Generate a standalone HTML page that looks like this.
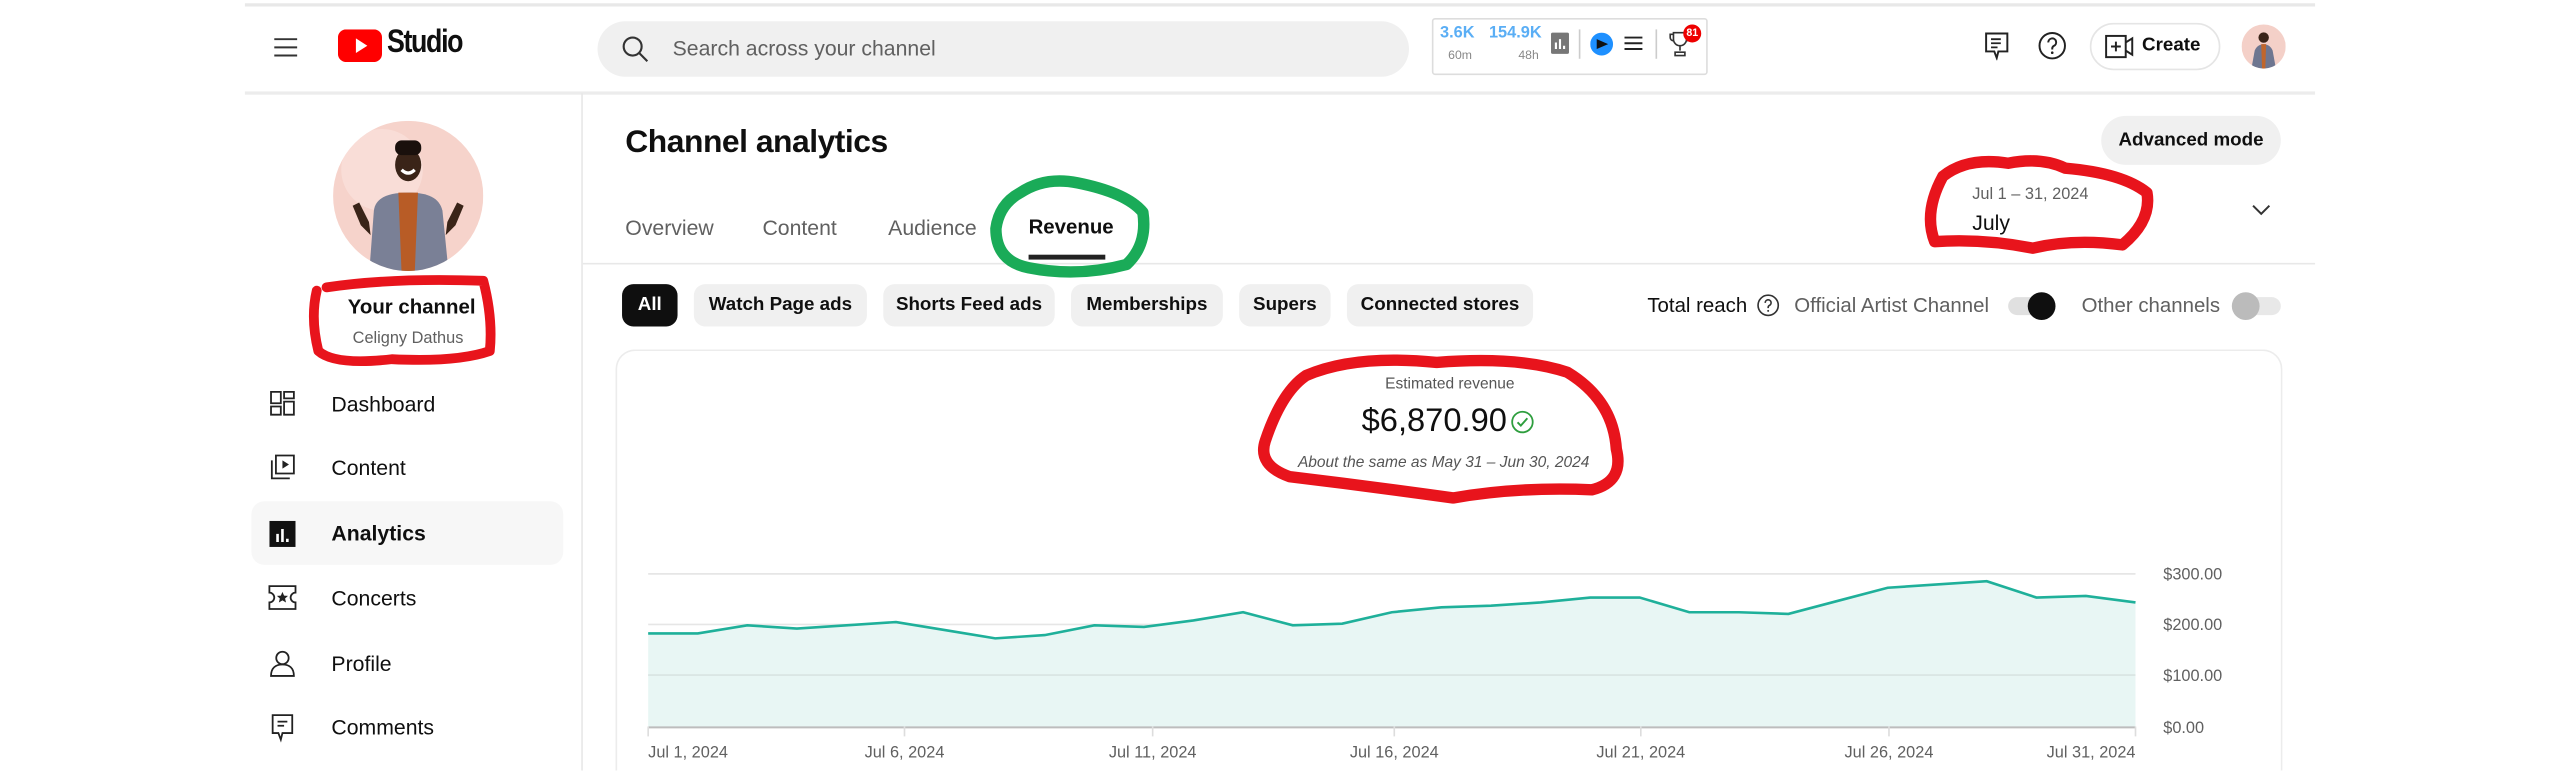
<!DOCTYPE html>
<html><head><meta charset="utf-8">
<style>
*{margin:0;padding:0;box-sizing:border-box}
html,body{width:2560px;height:771px;overflow:hidden;background:#fff;font-family:"Liberation Sans",Arial,sans-serif;color:#0f0f0f}
#clip{position:absolute;left:0;top:0;width:2560px;height:771px;overflow:hidden}
#w{position:absolute;left:0;top:0;width:1568px;height:472px;overflow:hidden;transform:scale(1.63265);transform-origin:0 0}
.a{position:absolute;white-space:nowrap}
.chip{position:absolute;top:174px;height:26px;border-radius:7px;background:#f0f0f0;font-size:11.5px;font-weight:bold;line-height:26px;text-align:center;color:#0f0f0f}
.nav{position:absolute;left:203px;font-size:13px}
.tab{position:absolute;top:132px;font-size:13px;color:#606060}
</style></head><body>
<div id="clip"><div id="w">
<div class="a" style="left:150px;top:2px;width:1268px;height:2px;background:#e8e8e8"></div>
<div class="a" style="left:150px;top:56px;width:1268px;height:2px;background:#ececec"></div>
<div class="a" style="left:356px;top:57px;width:1px;height:415px;background:#e8e8e8"></div>

<svg class="a" style="left:167px;top:21px" width="16" height="16" viewBox="0 0 16 16"><path d="M1 3h14M1 8h14M1 13h14" stroke="#333" stroke-width="1.2"/></svg>
<svg class="a" style="left:207px;top:18px" width="27" height="20" viewBox="0 0 27 20"><rect x="0" y="0" width="27" height="20" rx="5" fill="#f00"/><path d="M11 5.5l7 4.5-7 4.5z" fill="#fff"/></svg>
<div class="a" style="left:237px;top:15px;font-size:20px;font-weight:bold;letter-spacing:-1px;transform:scaleX(0.82);transform-origin:0 0">Studio</div>

<div class="a" style="left:366px;top:13px;width:497px;height:34px;border-radius:17px;background:#f0f0f0"></div>
<svg class="a" style="left:380px;top:21px" width="18" height="18" viewBox="0 0 18 18"><circle cx="7.5" cy="7.5" r="5.5" fill="none" stroke="#333" stroke-width="1.3"/><path d="M11.5 11.5l5 5" stroke="#333" stroke-width="1.3"/></svg>
<div class="a" style="left:412px;top:22px;font-size:13px;color:#606060">Search across your channel</div>

<div class="a" style="left:877px;top:11px;width:169px;height:35px;border:1px solid #ddd;border-radius:2px;background:#fff"></div>
<div class="a" style="left:882px;top:15px;font-size:10px;font-weight:bold;color:#5aaef5">3.6K</div>
<div class="a" style="left:912px;top:15px;font-size:10px;font-weight:bold;color:#5aaef5">154.9K</div>
<div class="a" style="left:887px;top:29px;font-size:7.5px;color:#888">60m</div>
<div class="a" style="left:930px;top:29px;font-size:7.5px;color:#888">48h</div>
<div class="a" style="left:950px;top:20px;width:11px;height:13px;background:#777;border-radius:1px"></div>
<svg class="a" style="left:950px;top:20px" width="11" height="13"><path d="M3 10V6M5.5 10V4M8 10V8" stroke="#fff" stroke-width="1.3"/></svg>
<div class="a" style="left:967px;top:18px;width:1px;height:18px;background:#ccc"></div>
<svg class="a" style="left:974px;top:20px" width="14" height="14"><circle cx="7" cy="7" r="7" fill="#1e90ff"/><path d="M4 4l7 3-7 3z" fill="#111"/></svg>
<svg class="a" style="left:995px;top:21px" width="11" height="11"><path d="M0 2h11M0 5.5h11M0 9h11" stroke="#222" stroke-width="1.2"/></svg>
<div class="a" style="left:1014px;top:18px;width:1px;height:18px;background:#ccc"></div>
<svg class="a" style="left:1022px;top:18px" width="14" height="18" viewBox="0 0 14 18"><path d="M3 2h8v4a4 4 0 0 1-8 0zM3 3H1v2a2 2 0 0 0 2 2M11 3h2v2a2 2 0 0 1-2 2M7 10v3M4 16h6v-2H4z" fill="none" stroke="#333" stroke-width="1"/></svg>
<div class="a" style="left:1031px;top:15px;width:11px;height:11px;border-radius:50%;background:#e00;color:#fff;font-size:6.5px;font-weight:bold;text-align:center;line-height:11px">81</div>

<svg class="a" style="left:1215px;top:19px" width="16" height="18" viewBox="0 0 16 18"><path d="M1.5 1.5h13v11H9l-1 4-1.5-4h-5z" fill="none" stroke="#222" stroke-width="1.2"/><path d="M4.5 5h6M4.5 7.5h6M4.5 10h4" stroke="#222" stroke-width="1.1"/></svg>
<svg class="a" style="left:1248px;top:19px" width="18" height="18" viewBox="0 0 18 18"><circle cx="9" cy="9" r="7.8" fill="none" stroke="#222" stroke-width="1.2"/><path d="M6.6 7a2.4 2.4 0 1 1 3.4 2.1c-.7.4-1 .8-1 1.6v.6" fill="none" stroke="#222" stroke-width="1.2"/><circle cx="9" cy="13.3" r=".8" fill="#222"/></svg>
<div class="a" style="left:1280px;top:14px;width:80px;height:29px;border:1px solid #e5e5e5;border-radius:15px"></div>
<svg class="a" style="left:1289px;top:21px" width="18" height="15" viewBox="0 0 18 15"><rect x="1" y="1" width="12" height="13" fill="none" stroke="#222" stroke-width="1.2"/><path d="M7 4.5v6M4 7.5h6M13 5l4-2.5v10L13 10" fill="none" stroke="#222" stroke-width="1.2"/></svg>
<div class="a" style="left:1312px;top:22px;font-size:11.5px;font-weight:bold">Create</div>
<svg class="a" style="left:1373px;top:15px" width="27" height="27" viewBox="0 0 27 27"><defs><clipPath id="c1"><circle cx="13.5" cy="13.5" r="13.5"/></clipPath></defs><g clip-path="url(#c1)"><rect width="27" height="27" fill="#f4d0c8"/><path d="M6 27l2-11c1-3 4-4 5.5-4s4.5 1 5.5 4l2 11z" fill="#6e7690"/><path d="M12 12h3l-.5 15h-2z" fill="#c0662c"/><circle cx="13.5" cy="8" r="3.2" fill="#3a2418"/></g></svg>

<svg class="a" style="left:204px;top:74px" width="92" height="92" viewBox="0 0 92 92"><defs><clipPath id="c2"><circle cx="46" cy="46" r="46"/></clipPath></defs><g clip-path="url(#c2)"><rect width="92" height="92" fill="#f6d3cb"/><circle cx="30" cy="30" r="25" fill="#fbe5e0" opacity=".6"/><path d="M22 95l3-40c1-8 9-11 21-11s19 3 21 11l4 40z" fill="#7a8096"/><path d="M40 44h12l-2 50h-8z" fill="#b85c26"/><path d="M22 62l-6-12-4 2 5 12 6 6zM70 62l6-12 4 2-5 12-6 6z" fill="#3a2418"/><ellipse cx="46" cy="27" rx="8" ry="10" fill="#3a2418"/><rect x="38" y="12" width="16" height="9" rx="4" fill="#1a100c"/><path d="M42 30q4 4 8 0" stroke="#fff" stroke-width="2" fill="none"/></g></svg>
<div class="a" style="left:213px;top:181px;font-size:12.5px;font-weight:bold">Your channel</div>
<div class="a" style="left:216px;top:202px;font-size:10px;color:#606060">Celigny Dathus</div>

<div class="a" style="left:154px;top:307px;width:191px;height:39px;border-radius:8px;background:#f7f7f7"></div>
<svg class="a" style="left:165px;top:239px" width="16" height="16" viewBox="0 0 16 16"><path d="M1 1h6v7H1zM9 1h6v4H9zM1 10h6v5H1zM9 7h6v8H9z" fill="none" stroke="#222" stroke-width="1.1"/></svg>
<div class="nav" style="top:240px">Dashboard</div>
<svg class="a" style="left:165px;top:278px" width="16" height="16" viewBox="0 0 16 16"><path d="M4 1h11v11H4z M1.5 4v11h11" fill="none" stroke="#222" stroke-width="1.1"/><path d="M8 4l4 2.5L8 9z" fill="#222"/></svg>
<div class="nav" style="top:279px">Content</div>
<svg class="a" style="left:165px;top:319px" width="16" height="16" viewBox="0 0 16 16"><rect width="16" height="16" fill="#111"/><path d="M5 13V8M8 13V5M11 13v-2" stroke="#fff" stroke-width="1.6"/></svg>
<div class="nav" style="top:319px;font-weight:bold">Analytics</div>
<svg class="a" style="left:164px;top:358px" width="18" height="16" viewBox="0 0 18 16"><path d="M1 1h16v4a3 3 0 0 0 0 6v4H1v-4a3 3 0 0 0 0-6z" fill="none" stroke="#222" stroke-width="1.1"/><path d="M9 4.5l1 2.3 2.4.2-1.8 1.6.6 2.4L9 9.7 6.8 11l.6-2.4L5.6 7 8 6.8z" fill="#222"/></svg>
<div class="nav" style="top:359px">Concerts</div>
<svg class="a" style="left:165px;top:398px" width="16" height="17" viewBox="0 0 16 17"><circle cx="8" cy="5" r="3.8" fill="none" stroke="#222" stroke-width="1.1"/><path d="M1 16c0-5 3-7 7-7s7 2 7 7z" fill="none" stroke="#222" stroke-width="1.1"/></svg>
<div class="nav" style="top:399px">Profile</div>
<svg class="a" style="left:166px;top:437px" width="14" height="18" viewBox="0 0 14 18"><path d="M1 1h12v11H7l-1 4-1.5-4H1z" fill="none" stroke="#222" stroke-width="1.1"/><path d="M4 5h6M4 7.5h4" stroke="#222" stroke-width="1.1"/></svg>
<div class="nav" style="top:438px">Comments</div>

<div class="a" style="left:383px;top:76px;font-size:19.5px;font-weight:bold;letter-spacing:-0.3px">Channel analytics</div>
<div class="a" style="left:1287px;top:71px;width:110px;height:30px;border-radius:15px;background:#f0f0f0;font-size:11.5px;font-weight:bold;line-height:30px;text-align:center">Advanced mode</div>
<div class="tab" style="left:383px">Overview</div>
<div class="tab" style="left:467px">Content</div>
<div class="tab" style="left:544px">Audience</div>
<div class="tab" style="left:630px;color:#0f0f0f;font-weight:bold;font-size:12.5px">Revenue</div>
<div class="a" style="left:630px;top:156px;width:47px;height:2.5px;background:#222"></div>
<div class="a" style="left:357px;top:161px;width:1061px;height:1px;background:#e8e8e8"></div>
<div class="a" style="left:1208px;top:114px;font-size:10px;color:#606060">Jul 1 – 31, 2024</div>
<div class="a" style="left:1208px;top:129px;font-size:13px">July</div>
<svg class="a" style="left:1379px;top:125px" width="12" height="8"><path d="M1 1l5 5 5-5" fill="none" stroke="#333" stroke-width="1.2"/></svg>

<div class="chip" style="left:381px;width:34px;background:#0f0f0f;color:#fff">All</div>
<div class="chip" style="left:425px;width:106px">Watch Page ads</div>
<div class="chip" style="left:541px;width:105px">Shorts Feed ads</div>
<div class="chip" style="left:656px;width:93px">Memberships</div>
<div class="chip" style="left:759px;width:56px">Supers</div>
<div class="chip" style="left:825px;width:114px">Connected stores</div>

<div class="a" style="left:1009px;top:180px;font-size:12.5px">Total reach</div>
<svg class="a" style="left:1076px;top:180px" width="14" height="14" viewBox="0 0 14 14"><circle cx="7" cy="7" r="6.2" fill="none" stroke="#333" stroke-width="1"/><path d="M5.2 5.5a1.8 1.8 0 1 1 2.5 1.6c-.5.3-.7.6-.7 1.2v.4" fill="none" stroke="#333" stroke-width="1"/><circle cx="7" cy="10.4" r=".6" fill="#333"/></svg>
<div class="a" style="left:1099px;top:180px;font-size:12.5px;color:#606060">Official Artist Channel</div>
<div class="a" style="left:1230px;top:182px;width:28px;height:11px;border-radius:6px;background:#e0e0e0"></div>
<div class="a" style="left:1242px;top:179px;width:17px;height:17px;border-radius:50%;background:#0f0f0f"></div>
<div class="a" style="left:1275px;top:180px;font-size:12.5px;color:#606060">Other channels</div>
<div class="a" style="left:1368px;top:182px;width:29px;height:11px;border-radius:6px;background:#e8e8e8"></div>
<div class="a" style="left:1367px;top:179px;width:17px;height:17px;border-radius:50%;background:#bbb"></div>

<div class="a" style="left:377px;top:214px;width:1021px;height:258px;border:1px solid #ececec;border-bottom:none;border-radius:12px 12px 0 0"></div>
<div class="a" style="left:828px;top:230px;font-size:9.5px;color:#555;width:120px;text-align:center">Estimated revenue</div>
<div class="a" style="left:834px;top:247px;font-size:20px">$6,870.90</div>
<svg class="a" style="left:925px;top:251px" width="15" height="15" viewBox="0 0 15 15"><circle cx="7.5" cy="7.5" r="6.3" fill="none" stroke="#2e9e3e" stroke-width="1.1"/><path d="M4.5 7.7l2 2 4-4.5" fill="none" stroke="#2e9e3e" stroke-width="1.2"/></svg>
<div class="a" style="left:795px;top:278px;font-size:9.5px;font-style:italic;color:#555">About the same as May 31 – Jun 30, 2024</div>

<svg class="a" style="left:0;top:0" width="1568" height="472" viewBox="0 0 1568 472">
<path d="M397 351.5H1308M397 382.5H1308M397 413.5H1308" stroke="#e6e6e6" stroke-width="1"/>
<path d="M397 388 L427.4 388 L457.7 383 L488.1 385 L518.5 383 L548.8 381 L579.2 386 L609.6 391 L639.9 389 L670.3 383 L700.7 384 L731 380 L761.4 375 L791.8 383 L822.1 382 L852.5 375 L882.9 372 L913.2 371 L943.6 369 L974 366 L1004.3 366 L1034.7 375 L1065.1 375 L1095.4 376 L1125.8 368 L1156.2 360 L1186.5 358 L1216.9 356 L1247.3 366 L1277.6 365 L1308 369 L1308 445 L397 445Z" fill="#e8f6f4"/>
<path d="M397 413.5H1308" stroke="#d8e4e2" stroke-width="1"/>
<path d="M397 388 L427.4 388 L457.7 383 L488.1 385 L518.5 383 L548.8 381 L579.2 386 L609.6 391 L639.9 389 L670.3 383 L700.7 384 L731 380 L761.4 375 L791.8 383 L822.1 382 L852.5 375 L882.9 372 L913.2 371 L943.6 369 L974 366 L1004.3 366 L1034.7 375 L1065.1 375 L1095.4 376 L1125.8 368 L1156.2 360 L1186.5 358 L1216.9 356 L1247.3 366 L1277.6 365 L1308 369" fill="none" stroke="#1fb09a" stroke-width="1.6"/>
<path d="M397 445.5H1308" stroke="#bdbdbd" stroke-width="1.2"/>
<path d="M397 445v6M554 445v6M706 445v6M854 445v6M1005 445v6M1157 445v6M1308 445v6" stroke="#ddd" stroke-width="1"/>
<g font-family="Liberation Sans, Arial, sans-serif" font-size="10" fill="#606060">
<text x="1325" y="355">$300.00</text><text x="1325" y="386">$200.00</text><text x="1325" y="417">$100.00</text><text x="1325" y="449">$0.00</text>
<text x="397" y="464">Jul 1, 2024</text><text x="554" y="464" text-anchor="middle">Jul 6, 2024</text><text x="706" y="464" text-anchor="middle">Jul 11, 2024</text><text x="854" y="464" text-anchor="middle">Jul 16, 2024</text><text x="1005" y="464" text-anchor="middle">Jul 21, 2024</text><text x="1157" y="464" text-anchor="middle">Jul 26, 2024</text><text x="1308" y="464" text-anchor="end">Jul 31, 2024</text>
</g>
<g fill="none" stroke-linecap="round" stroke-linejoin="round">
<path d="M200 176 Q240 170 296 172 Q302 195 300 215 Q280 222 240 220 Q205 224 195 215 Q190 195 194 178" stroke="#e8141c" stroke-width="6"/>
<path d="M625 118 Q640 108 660 112 Q690 118 700 130 Q703 150 690 162 Q660 170 630 164 Q610 160 610 140 Q612 125 625 118" stroke="#1aab58" stroke-width="7"/>
<path d="M1190 108 Q1205 96 1230 100 Q1250 96 1265 103 Q1300 106 1315 118 Q1318 135 1300 150 Q1270 146 1245 152 Q1215 146 1185 148 Q1178 130 1190 108" stroke="#e8141c" stroke-width="7"/>
<path d="M800 230 Q830 217 880 222 Q930 218 960 228 Q988 245 990 275 Q995 295 975 300 Q930 298 890 305 Q840 298 790 292 Q770 285 775 270 Q785 240 800 230" stroke="#e8141c" stroke-width="7"/>
</g>
</svg>
</div></div>
</body></html>
